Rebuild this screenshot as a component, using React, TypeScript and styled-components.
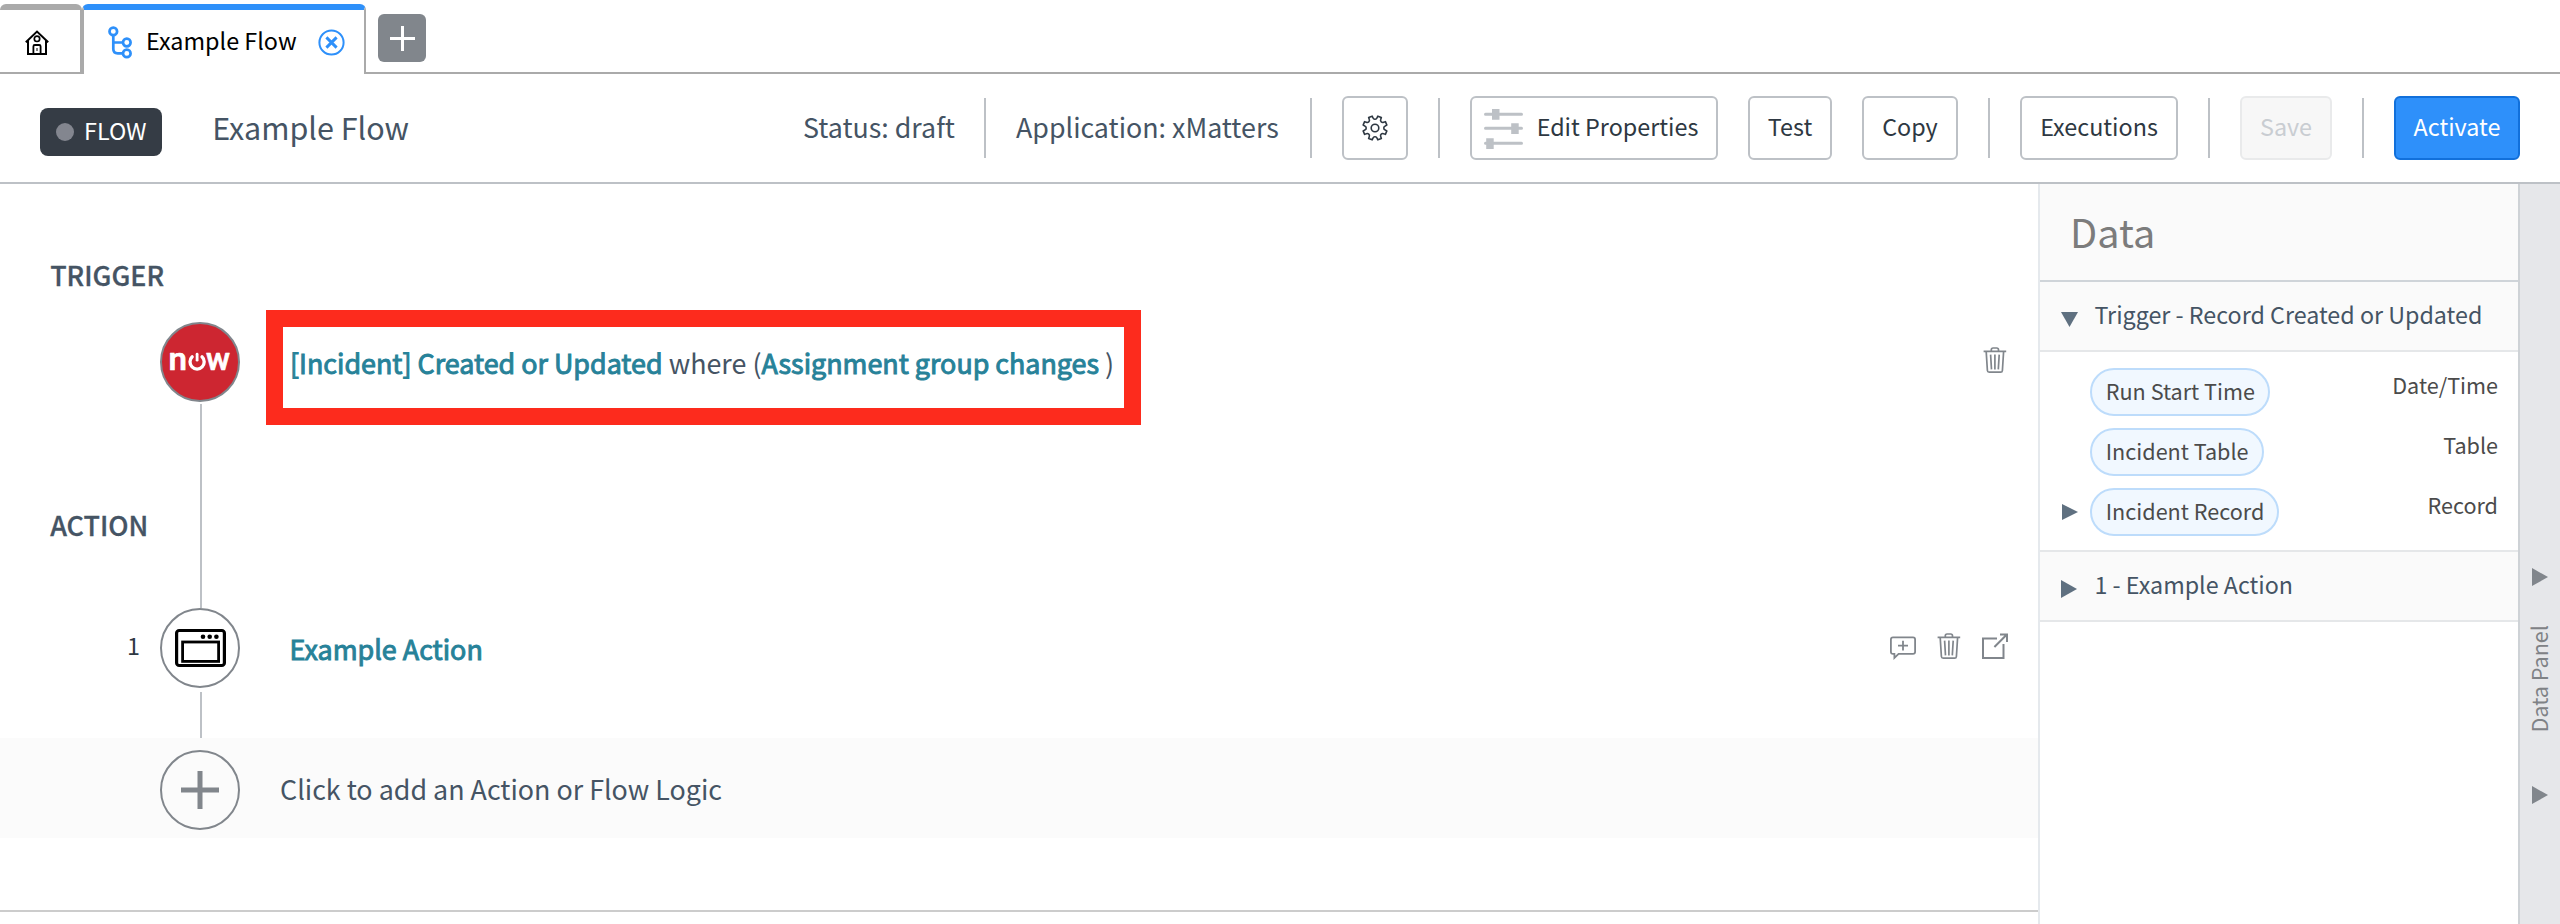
import React from "react";
import styled, { createGlobalStyle, css } from "styled-components";

const colors = {
  blue: "#2e90fa",
  blueDark: "#1170db",
  tabLine: "#aaaaaa",
  line: "#bdc1c6",
  icon: "#81868c",
  ink: "#2e3842",
  slate: "#455464",
  teal: "#278299",
  red: "#fd2b1d",
  panelLine: "#e5e7e9",
};

const GlobalStyle = createGlobalStyle`
  * { box-sizing: border-box; }
  body {
    margin: 0;
    background: #fff;
    color: ${colors.slate};
    font-family: "Noto Sans CJK SC", sans-serif;
    font-size: 23.35px;
    line-height: 36px;
    white-space: nowrap;
  }
  svg { display: block; flex: none; overflow: visible; }
`;

const Page = styled.div`
  display: flex;
  flex-direction: column;
  width: 2560px;
  height: 924px;
  overflow: hidden;
`;

/* ---- Tabs ---- */

const TabBar = styled.div`
  display: flex;
  height: 74px;
  padding-top: 4px;
`;

const HomeTab = styled.div`
  width: 82px;
  border: solid ${colors.tabLine};
  border-width: 6px 2px 2px 0;
  border-radius: 6px 6px 0 0;
  padding: 20px 0 0 25px;
`;

const ActiveTab = styled.div`
  display: flex;
  width: 284px;
  border: solid ${colors.tabLine};
  border-width: 6px 2px 0;
  border-top-color: ${colors.blue};
  border-radius: 6px 6px 0 0;
  padding: 12px 0 0 24px;
  color: #000;
`;

const TabIcon = styled.div`
  width: 38px;
  padding-top: 4px;
`;

const TabName = styled.div`
  width: 172px;
`;

const CloseIcon = styled.div`
  padding-top: 7px;
`;

const TabRest = styled.div`
  flex: 1;
  border-bottom: 2px solid ${colors.tabLine};
  padding: 10px 0 0 12px;
`;

const AddTab = styled.div`
  display: grid;
  place-items: center;
  width: 48px;
  height: 48px;
  border-radius: 6px;
  background: ${colors.icon};
`;

/* ---- Header ---- */

const Header = styled.div`
  display: flex;
  align-items: center;
  height: 110px;
  padding: 0 40px;
  border-bottom: 2px solid ${colors.line};
`;

const Badge = styled.div`
  display: flex;
  align-items: center;
  width: 122px;
  height: 48px;
  margin-top: 8px;
  padding-left: 16px;
  border-radius: 8px;
  background: #353c45;
  color: #fff;
`;

const BadgeDot = styled.div`
  width: 18px;
  height: 18px;
  margin-right: 10px;
  border-radius: 50%;
  background: #83868f;
`;

const BadgeText = styled.div`
  padding-bottom: 4px;
`;

const FlowTitle = styled.div`
  flex: 1;
  margin-left: 50.2px;
  padding-bottom: 3px;
  font-size: 30.5px;
`;

const Meta = styled.div<{ $width: number }>`
  width: ${(p) => p.$width}px;
  padding-bottom: 3px;
  font-size: 26.8px;
`;

const Divider = styled.div`
  width: 2px;
  height: 60px;
  margin: 0 30px;
  background: ${colors.line};
`;

type Tone = "plain" | "disabled" | "primary";

const tones = {
  plain: css`
    border-color: ${colors.line};
    background: #fff;
    color: ${colors.ink};
  `,
  disabled: css`
    border-color: #e9eaeb;
    background: #f7f7f7;
    color: #c9cdd2;
  `,
  primary: css`
    border-color: ${colors.blueDark};
    background: ${colors.blue};
    color: #fff;
  `,
};

const Button = styled.button<{ $width: number; $tone?: Tone }>`
  display: flex;
  align-items: center;
  justify-content: center;
  width: ${(p) => p.$width}px;
  height: 64px;
  margin: 0;
  padding: 0;
  border: 2px solid;
  border-radius: 6px;
  font: inherit;
  ${(p) => tones[p.$tone ?? "plain"]}

  & + & { margin-left: 30px; }
`;

const ButtonText = styled.span`
  padding-bottom: 4px;
`;

const SlidersSlot = styled.span`
  margin: 2px 14px 0 -6px;
`;

/* ---- Body ---- */

const Body = styled.div`
  display: grid;
  grid-template-columns: 2038px 480px 42px;
  flex: 1;
`;

const Canvas = styled.div`
  padding-top: 73px;
`;

const SectionLabel = styled.div`
  padding-left: 50.2px;
  font-size: 26.9px;
  font-weight: 500;
  -webkit-text-stroke: 0.3px;
`;

const Step = styled.div<{ $rows: string; $tint?: boolean }>`
  display: grid;
  grid-template-columns: 160px 80px 1fr;
  grid-template-rows: ${(p) => p.$rows};
  background: ${(p) => (p.$tint ? "#fbfbfb" : "transparent")};
`;

const Rail = styled.div<{ $top?: number }>`
  grid-column: 2;
  grid-row: 1 / -1;
  padding-top: ${(p) => p.$top ?? 0}px;
`;

const Node = styled.div<{ $fill?: string }>`
  display: grid;
  place-items: center;
  width: 80px;
  height: 80px;
  border: 2px solid ${colors.icon};
  border-radius: 50%;
  background: ${(p) => p.$fill ?? "transparent"};
`;

const Connector = styled.div<{ $gap: number; $length: number }>`
  width: 2px;
  height: ${(p) => p.$length}px;
  margin: ${(p) => p.$gap}px 0 0 40px;
  background: ${colors.line};
`;

const StepMain = styled.div`
  grid-column: 3;
  grid-row: 1;
  display: flex;
  justify-content: space-between;
  padding-right: 30px;
`;

const StepNumber = styled.div`
  grid-column: 1;
  padding: 19px 20px 0 0;
  text-align: right;
  color: ${colors.ink};
`;

const NextSection = styled.div`
  grid-column: 1;
  grid-row: 2;
  padding-top: 82px;
`;

const Highlight = styled.div`
  display: flex;
  align-items: center;
  width: 875px;
  height: 115px;
  margin: 17px 0 0 26px;
  padding: 0 0 10px 7px;
  border: 17px solid ${colors.red};
  font-size: 26.86px;
`;

const Strong = styled.span`
  color: ${colors.teal};
  -webkit-text-stroke: 0.95px ${colors.teal};
`;

const StepName = styled.div`
  padding: 23px 0 0 49.5px;
  font-size: 26.9px;
`;

const AddPrompt = styled.div`
  padding: 33px 0 0 40px;
  font-size: 26.85px;
`;

const StepActions = styled.div<{ $top: number }>`
  display: flex;
  gap: 20px;
  padding-top: ${(p) => p.$top}px;
`;

const CanvasEnd = styled.div`
  margin-top: 72px;
  border-top: 2px solid #cccccc;
`;

/* ---- Data panel ---- */

const Panel = styled.div`
  border-left: 2px solid #e5e9ed;
`;

const PanelTitle = styled.div`
  height: 98px;
  padding: 29px 0 0 30px;
  border-bottom: 2px solid #cfd4d9;
  background: #fafafa;
  color: #7c7c7c;
  font-size: 39.6px;
`;

const PanelSection = styled.div`
  display: flex;
  height: 70px;
  padding: 14px 0 0 21px;
  border-bottom: 2px solid ${colors.panelLine};
  background: #fafafa;
  font-size: 23.28px;
`;

const SectionArrow = styled.div<{ $top: number }>`
  width: 33.4px;
  padding-top: ${(p) => p.$top}px;
`;

const PanelFields = styled.div`
  padding-top: 16px;
  height: 200px;
  border-bottom: 2px solid ${colors.panelLine};
`;

const Field = styled.div`
  display: grid;
  grid-template-columns: 28px 1fr auto;
  height: 60px;
  padding: 0 20px 0 22px;
  color: #4b4b4b;
  font-size: 21.6px;
`;

const FieldArrow = styled.div`
  padding-top: 16px;
`;

const Pill = styled.div`
  justify-self: start;
  height: 48px;
  padding: 3px 13.2px 0 13.8px;
  border: 2px solid #bddcfb;
  border-radius: 24px;
  background: #f1f8ff;
`;

const FieldType = styled.div`
  margin-top: -1.5px;
`;

const Strip = styled.div`
  display: flex;
  flex-direction: column;
  align-items: center;
  padding-top: 384px;
  border-left: 2px solid #ced2d6;
  background: #e6e7ea;
`;

const StripLabel = styled.div`
  margin: 39px 2.8px 53.5px 0;
  writing-mode: vertical-rl;
  transform: rotate(180deg);
  color: #7f8286;
  font-size: 21.65px;
`;

/* ---- Icons ---- */

const HomeIcon = () => (
  <svg width="24" height="26" viewBox="0 0 24 26" fill="none" stroke="#000" strokeWidth="2">
    <path d="M.8 12.2 12 1.6l11.2 10.6M3 10.8V24h18V10.8" />
    <circle cx="12" cy="8.8" r="2.7" strokeWidth="1.7" />
    <path d="M8.4 24v-7.6q0-1.4 1.4-1.4h4.4q1.4 0 1.4 1.4V24" strokeWidth="1.8" />
    <path d="M12 18v3" strokeWidth="1" />
  </svg>
);

const FlowIcon = () => (
  <svg width="24" height="32" viewBox="0 0 24 32" fill="none" stroke={colors.blue} strokeWidth="2.7">
    <circle cx="5.3" cy="5.4" r="3.8" />
    <circle cx="18.8" cy="16.5" r="3.8" />
    <circle cx="18.8" cy="27.4" r="3.8" />
    <path d="M5.3 9.5V23q0 4.3 4.4 4.3h5M5.3 16.5h9.4" />
  </svg>
);

const CloseGlyph = () => (
  <svg width="27" height="27" viewBox="0 0 27 27" fill="none" stroke={colors.blue}>
    <circle cx="13.5" cy="13.5" r="12.1" strokeWidth="2" />
    <path d="m8.4 8.4 10.2 10.2m0-10.2L8.4 18.6" strokeWidth="2.9" />
  </svg>
);

const Plus = ({ width, height, weight, color }: { width: number; height: number; weight: number; color: string }) => (
  <svg width={width} height={height} stroke={color} strokeWidth={weight}>
    <path d={`M0 ${height / 2}h${width}M${width / 2} 0v${height}`} />
  </svg>
);

/* Eight flared teeth around a hub, one tooth every 45 degrees. */
const GearIcon = () => {
  const at = (r: number, deg: number) => {
    const a = (deg * Math.PI) / 180;
    return `${(13 + r * Math.sin(a)).toFixed(2)} ${(13 - r * Math.cos(a)).toFixed(2)}`;
  };
  let d = `M${at(8.8, 0)}`;
  for (let i = 0; i < 8; i++) {
    const c = i * 45 + 22.5;
    d += `Q${at(8.8, c - 13)} ${at(10.4, c - 11)}L${at(12.2, c - 9)}L${at(12.2, c + 9)}L${at(10.4, c + 11)}Q${at(8.8, c + 13)} ${at(8.8, c + 22.5)}`;
  }
  return (
    <svg width="26" height="26" viewBox="0 0 26 26" fill="none" stroke={colors.ink} strokeWidth="1.6" strokeLinejoin="round">
      <path d={`${d}Z`} />
      <circle cx="13" cy="13" r="3.8" />
    </svg>
  );
};

const SlidersIcon = () => (
  <svg width="39" height="40" viewBox="0 0 39 40" stroke={colors.line} fill={colors.line}>
    <path d="M1.5 5.3h36M1.5 19.3h36M1.5 34.3h36" strokeWidth="3" strokeLinecap="round" />
    <path d="M8 0h7.5v10.7H8zM27.2 14.3h7.5V25h-7.5zM2.2 29.2h7.5v10.7H2.2z" stroke="none" />
  </svg>
);

const NowLogo = () => (
  <svg width="60" height="22" viewBox="0 0 60 22" fill="#fff" stroke="#fff">
    <g fontFamily="Roboto, sans-serif" fontWeight="500" fontSize="32" strokeWidth="0.7" strokeLinejoin="round">
      <text x="-1.6" y="19.4" textLength="18.5" lengthAdjust="spacingAndGlyphs">n</text>
      <text x="36" y="19.4" textLength="24" lengthAdjust="spacingAndGlyphs">w</text>
    </g>
    <g fill="none" strokeWidth="3.3" strokeLinecap="round">
      <path d="M22.2 5.8a7.100 7.100 0 1 0 9.800 0" />
      <path d="M27.100 3.200v6" strokeWidth="2.800" />
    </g>
  </svg>
);

const WindowIcon = () => (
  <svg width="51" height="38" viewBox="0 0 51 38" fill="none" stroke="#000">
    <rect x="1.6" y="1.5" width="47.8" height="35" rx="2.6" strokeWidth="3.2" />
    <rect x="7.6" y="13" width="36" height="19.4" strokeWidth="2.8" />
    <g fill="#000" stroke="none">
      <circle cx="28" cy="7.7" r="2.3" />
      <circle cx="34.7" cy="7.7" r="2.3" />
      <circle cx="41.4" cy="7.7" r="2.3" />
    </g>
  </svg>
);

const TrashIcon = () => (
  <svg width="26" height="26" viewBox="0 0 26 26" fill="none" stroke={colors.icon} strokeWidth="1.7">
    <path d="M1.6 4.4h22.6M9.3 4.2V2.8q0-1.8 1.8-1.8h3.6q1.8 0 1.8 1.8v1.4" />
    <path d="m4.2 4.6 1.2 18.9q.1 1.7 1.8 1.7h11.4q1.7 0 1.8-1.7l1.2-18.900" />
    <path d="m8.6 7.6.9 14.8M12.9 7.6v14.8M17.2 7.6l-.9 14.8" />
  </svg>
);

const CommentIcon = () => (
  <svg width="26" height="26" viewBox="0 0 26 26" fill="none" stroke={colors.icon} strokeWidth="1.8">
    <path d="M3 4.4h20q2.1 0 2.1 2.1v12.3q0 2.1-2.1 2.1H8.6l-4.2 4v-4H3q-2.1 0-2.1-2.1V6.5Q.9 4.400 3 4.400Z" />
    <path d="M13 7.800v9.600M8 12.600h10" />
  </svg>
);

const OpenIcon = () => (
  <svg width="26" height="26" viewBox="0 0 26 26" fill="none" stroke={colors.icon} strokeWidth="2">
    <path d="M15 5.5H1V25h20.5V11" />
    <path d="M12.4 14 24.6 1.8M18 1.4h7V9" />
  </svg>
);

const Triangle = ({ down, color = "#5f7080", width = 16, height = 18 }: { down?: boolean; color?: string; width?: number; height?: number }) => (
  <svg width={width} height={height} fill={color}>
    <path d={down ? `M0 0h${width}L${width / 2} ${height}Z` : `M0 0v${height}L${width} ${height / 2}Z`} />
  </svg>
);

const fields = [
  { name: "Run Start Time", type: "Date/Time" },
  { name: "Incident Table", type: "Table" },
  { name: "Incident Record", type: "Record", expandable: true },
];

export default function App() {
  return (
    <Page>
      <GlobalStyle />
      <TabBar>
        <HomeTab><HomeIcon /></HomeTab>
        <ActiveTab>
          <TabIcon><FlowIcon /></TabIcon>
          <TabName>Example Flow</TabName>
          <CloseIcon><CloseGlyph /></CloseIcon>
        </ActiveTab>
        <TabRest>
          <AddTab><Plus width={25} height={25} weight={3} color="#fff" /></AddTab>
        </TabRest>
      </TabBar>

      <Header>
        <Badge><BadgeDot /><BadgeText>FLOW</BadgeText></Badge>
        <FlowTitle>Example Flow</FlowTitle>
        <Meta $width={151}>Status: draft</Meta>
        <Divider />
        <Meta $width={264}>Application: xMatters</Meta>
        <Divider />
        <Button $width={66} aria-label="Settings"><GearIcon /></Button>
        <Divider />
        <Button $width={248}>
          <SlidersSlot><SlidersIcon /></SlidersSlot>
          <ButtonText>Edit Properties</ButtonText>
        </Button>
        <Button $width={84}><ButtonText>Test</ButtonText></Button>
        <Button $width={96}><ButtonText>Copy</ButtonText></Button>
        <Divider />
        <Button $width={158}><ButtonText>Executions</ButtonText></Button>
        <Divider />
        <Button $width={92} $tone="disabled"><ButtonText>Save</ButtonText></Button>
        <Divider />
        <Button $width={126} $tone="primary"><ButtonText>Activate</ButtonText></Button>
      </Header>

      <Body>
        <Canvas>
          <SectionLabel>TRIGGER</SectionLabel>
          <Step $rows="132px 183px">
            <Rail $top={29}>
              <Node $fill="#cd2631"><NowLogo /></Node>
              <Connector $gap={2} $length={204} />
            </Rail>
            <StepMain>
              <Highlight>
                <span>
                  <Strong>[Incident] Created or Updated</Strong> where (<Strong>Assignment group changes</Strong> )
                </span>
              </Highlight>
              <StepActions $top={54}><TrashIcon /></StepActions>
            </StepMain>
            <NextSection>
              <SectionLabel>ACTION</SectionLabel>
            </NextSection>
          </Step>
          <Step $rows="130px">
            <StepNumber>1</StepNumber>
            <Rail>
              <Node><WindowIcon /></Node>
              <Connector $gap={4} $length={46} />
            </Rail>
            <StepMain>
              <StepName><Strong>Example Action</Strong></StepName>
              <StepActions $top={25}><CommentIcon /><TrashIcon /><OpenIcon /></StepActions>
            </StepMain>
          </Step>
          <Step $rows="100px" $tint>
            <Rail $top={12}>
              <Node><Plus width={38} height={38} weight={5} color={colors.icon} /></Node>
            </Rail>
            <StepMain>
              <AddPrompt>Click to add an Action or Flow Logic</AddPrompt>
            </StepMain>
          </Step>
          <CanvasEnd />
        </Canvas>

        <Panel>
          <PanelTitle>Data</PanelTitle>
          <PanelSection>
            <SectionArrow $top={15.5}><Triangle down width={17} height={15} /></SectionArrow>
            Trigger - Record Created or Updated
          </PanelSection>
          <PanelFields>
            {fields.map((f) => (
              <Field key={f.name}>
                <FieldArrow>{f.expandable && <Triangle width={16} height={16} />}</FieldArrow>
                <Pill>{f.name}</Pill>
                <FieldType>{f.type}</FieldType>
              </Field>
            ))}
          </PanelFields>
          <PanelSection>
            <SectionArrow $top={14}><Triangle /></SectionArrow>
            1 - Example Action
          </PanelSection>
        </Panel>

        <Strip>
          <Triangle color={colors.icon} />
          <StripLabel>Data Panel</StripLabel>
          <Triangle color={colors.icon} />
        </Strip>
      </Body>
    </Page>
  );
}
